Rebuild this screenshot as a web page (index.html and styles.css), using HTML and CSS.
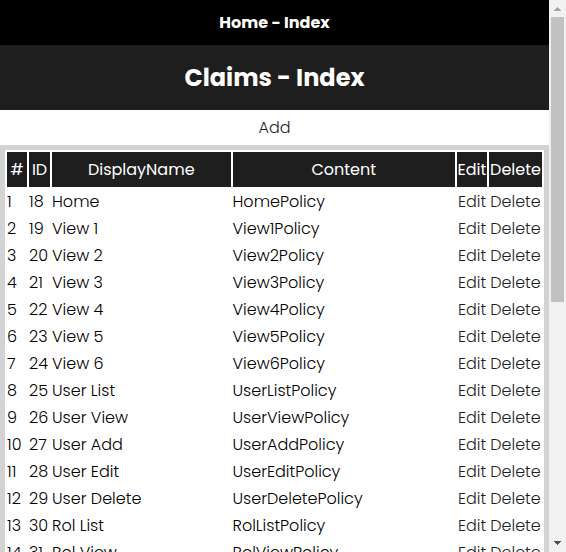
FILE: index.html
```html
<!DOCTYPE html>
<html lang="en">
<head>
<meta charset="utf-8">
<title>Claims - Index</title>
<link rel="stylesheet" href="styles.css">
</head>
<body>
<div class="page">
  <header class="topbar">Home - Index</header>
  <h1 class="title">Claims - Index</h1>
  <nav class="actions"><a href="#add">Add</a></nav>
  <main class="panel">
    <table class="claims">
      <colgroup><col class="col-num"><col class="col-id"><col class="col-name"><col><col class="col-edit"><col class="col-delete"></colgroup>
      <thead>
        <tr><th>#</th><th>ID</th><th>DisplayName</th><th>Content</th><th>Edit</th><th>Delete</th></tr>
      </thead>
      <tbody>
        <tr><td>1</td><td>18</td><td>Home</td><td>HomePolicy</td><td><a href="#edit">Edit</a></td><td><a href="#delete">Delete</a></td></tr>
        <tr><td>2</td><td>19</td><td>View 1</td><td>View1Policy</td><td><a href="#edit">Edit</a></td><td><a href="#delete">Delete</a></td></tr>
        <tr><td>3</td><td>20</td><td>View 2</td><td>View2Policy</td><td><a href="#edit">Edit</a></td><td><a href="#delete">Delete</a></td></tr>
        <tr><td>4</td><td>21</td><td>View 3</td><td>View3Policy</td><td><a href="#edit">Edit</a></td><td><a href="#delete">Delete</a></td></tr>
        <tr><td>5</td><td>22</td><td>View 4</td><td>View4Policy</td><td><a href="#edit">Edit</a></td><td><a href="#delete">Delete</a></td></tr>
        <tr><td>6</td><td>23</td><td>View 5</td><td>View5Policy</td><td><a href="#edit">Edit</a></td><td><a href="#delete">Delete</a></td></tr>
        <tr><td>7</td><td>24</td><td>View 6</td><td>View6Policy</td><td><a href="#edit">Edit</a></td><td><a href="#delete">Delete</a></td></tr>
        <tr><td>8</td><td>25</td><td>User List</td><td>UserListPolicy</td><td><a href="#edit">Edit</a></td><td><a href="#delete">Delete</a></td></tr>
        <tr><td>9</td><td>26</td><td>User View</td><td>UserViewPolicy</td><td><a href="#edit">Edit</a></td><td><a href="#delete">Delete</a></td></tr>
        <tr><td>10</td><td>27</td><td>User Add</td><td>UserAddPolicy</td><td><a href="#edit">Edit</a></td><td><a href="#delete">Delete</a></td></tr>
        <tr><td>11</td><td>28</td><td>User Edit</td><td>UserEditPolicy</td><td><a href="#edit">Edit</a></td><td><a href="#delete">Delete</a></td></tr>
        <tr><td>12</td><td>29</td><td>User Delete</td><td>UserDeletePolicy</td><td><a href="#edit">Edit</a></td><td><a href="#delete">Delete</a></td></tr>
        <tr><td>13</td><td>30</td><td>Rol List</td><td>RolListPolicy</td><td><a href="#edit">Edit</a></td><td><a href="#delete">Delete</a></td></tr>
        <tr><td>14</td><td>31</td><td>Rol View</td><td>RolViewPolicy</td><td><a href="#edit">Edit</a></td><td><a href="#delete">Delete</a></td></tr>
      </tbody>
    </table>
  </main>
</div>
<div class="scrollbar" aria-hidden="true">
  <svg class="arrow" viewBox="0 0 17 17" shape-rendering="crispEdges"><path fill="#a3a3a3" d="M8 7h1v1h1v1h1v1h1v1H5v-1h1V9h1V8h1z"/></svg>
  <div class="track"><div class="thumb"></div></div>
  <svg class="arrow" viewBox="0 0 17 17" shape-rendering="crispEdges"><path fill="#505050" d="M5 6h7v1h-1v1h-1v1H9v1H8V9H7V8H6V7H5z"/></svg>
</div>
</body>
</html>
```
FILE: styles.css
```css
* { box-sizing: border-box; }

body {
  margin: 0;
  height: 100vh;
  display: grid;
  grid-template-columns: minmax(0, 1fr) 17px;
  overflow: hidden;
  background: #fff;
  color: #000;
  font-family: Poppins, Inter, "Liberation Sans", sans-serif;
  font-size: 16px;
  font-weight: 300;
  line-height: 25px;
}

.page {
  min-height: 0;
  overflow: hidden;
}

.topbar {
  padding: 10px;
  background: #000;
  color: #fff;
  font-weight: 700;
  text-align: center;
}

.title {
  margin: 0;
  padding: 15px;
  background: #1e1e1e;
  color: #fff;
  font-size: 24px;
  font-weight: 700;
  line-height: 35px;
  text-align: center;
}

.actions {
  padding: 5px;
  text-align: center;
}

a {
  color: #1e1e1e;
  text-decoration: none;
}

.panel {
  padding: 5px;
  background: #d3d3d3;
}

.claims {
  width: 100%;
  table-layout: fixed;
  border-spacing: 2px;
  background: #fff;
  white-space: nowrap;
}

.col-num { width: 20px; }
.col-id { width: 21px; }
.col-name { width: 34%; }
.col-edit { width: 30px; }
.col-delete { width: 53px; }

th {
  padding: 5px 0;
  background: #1e1e1e;
  color: #fff;
  font-weight: 400;
  text-align: center;
}

td {
  padding: 0;
}

td:nth-child(n + 5) {
  text-align: center;
}

.scrollbar {
  display: flex;
  flex-direction: column;
  min-height: 0;
  background: #f1f1f1;
}

.arrow {
  width: 17px;
  height: 17px;
}

.track {
  flex: 1;
  padding: 0 2px;
}

.thumb {
  height: 55%;
  background: #c1c1c1;
}
```
